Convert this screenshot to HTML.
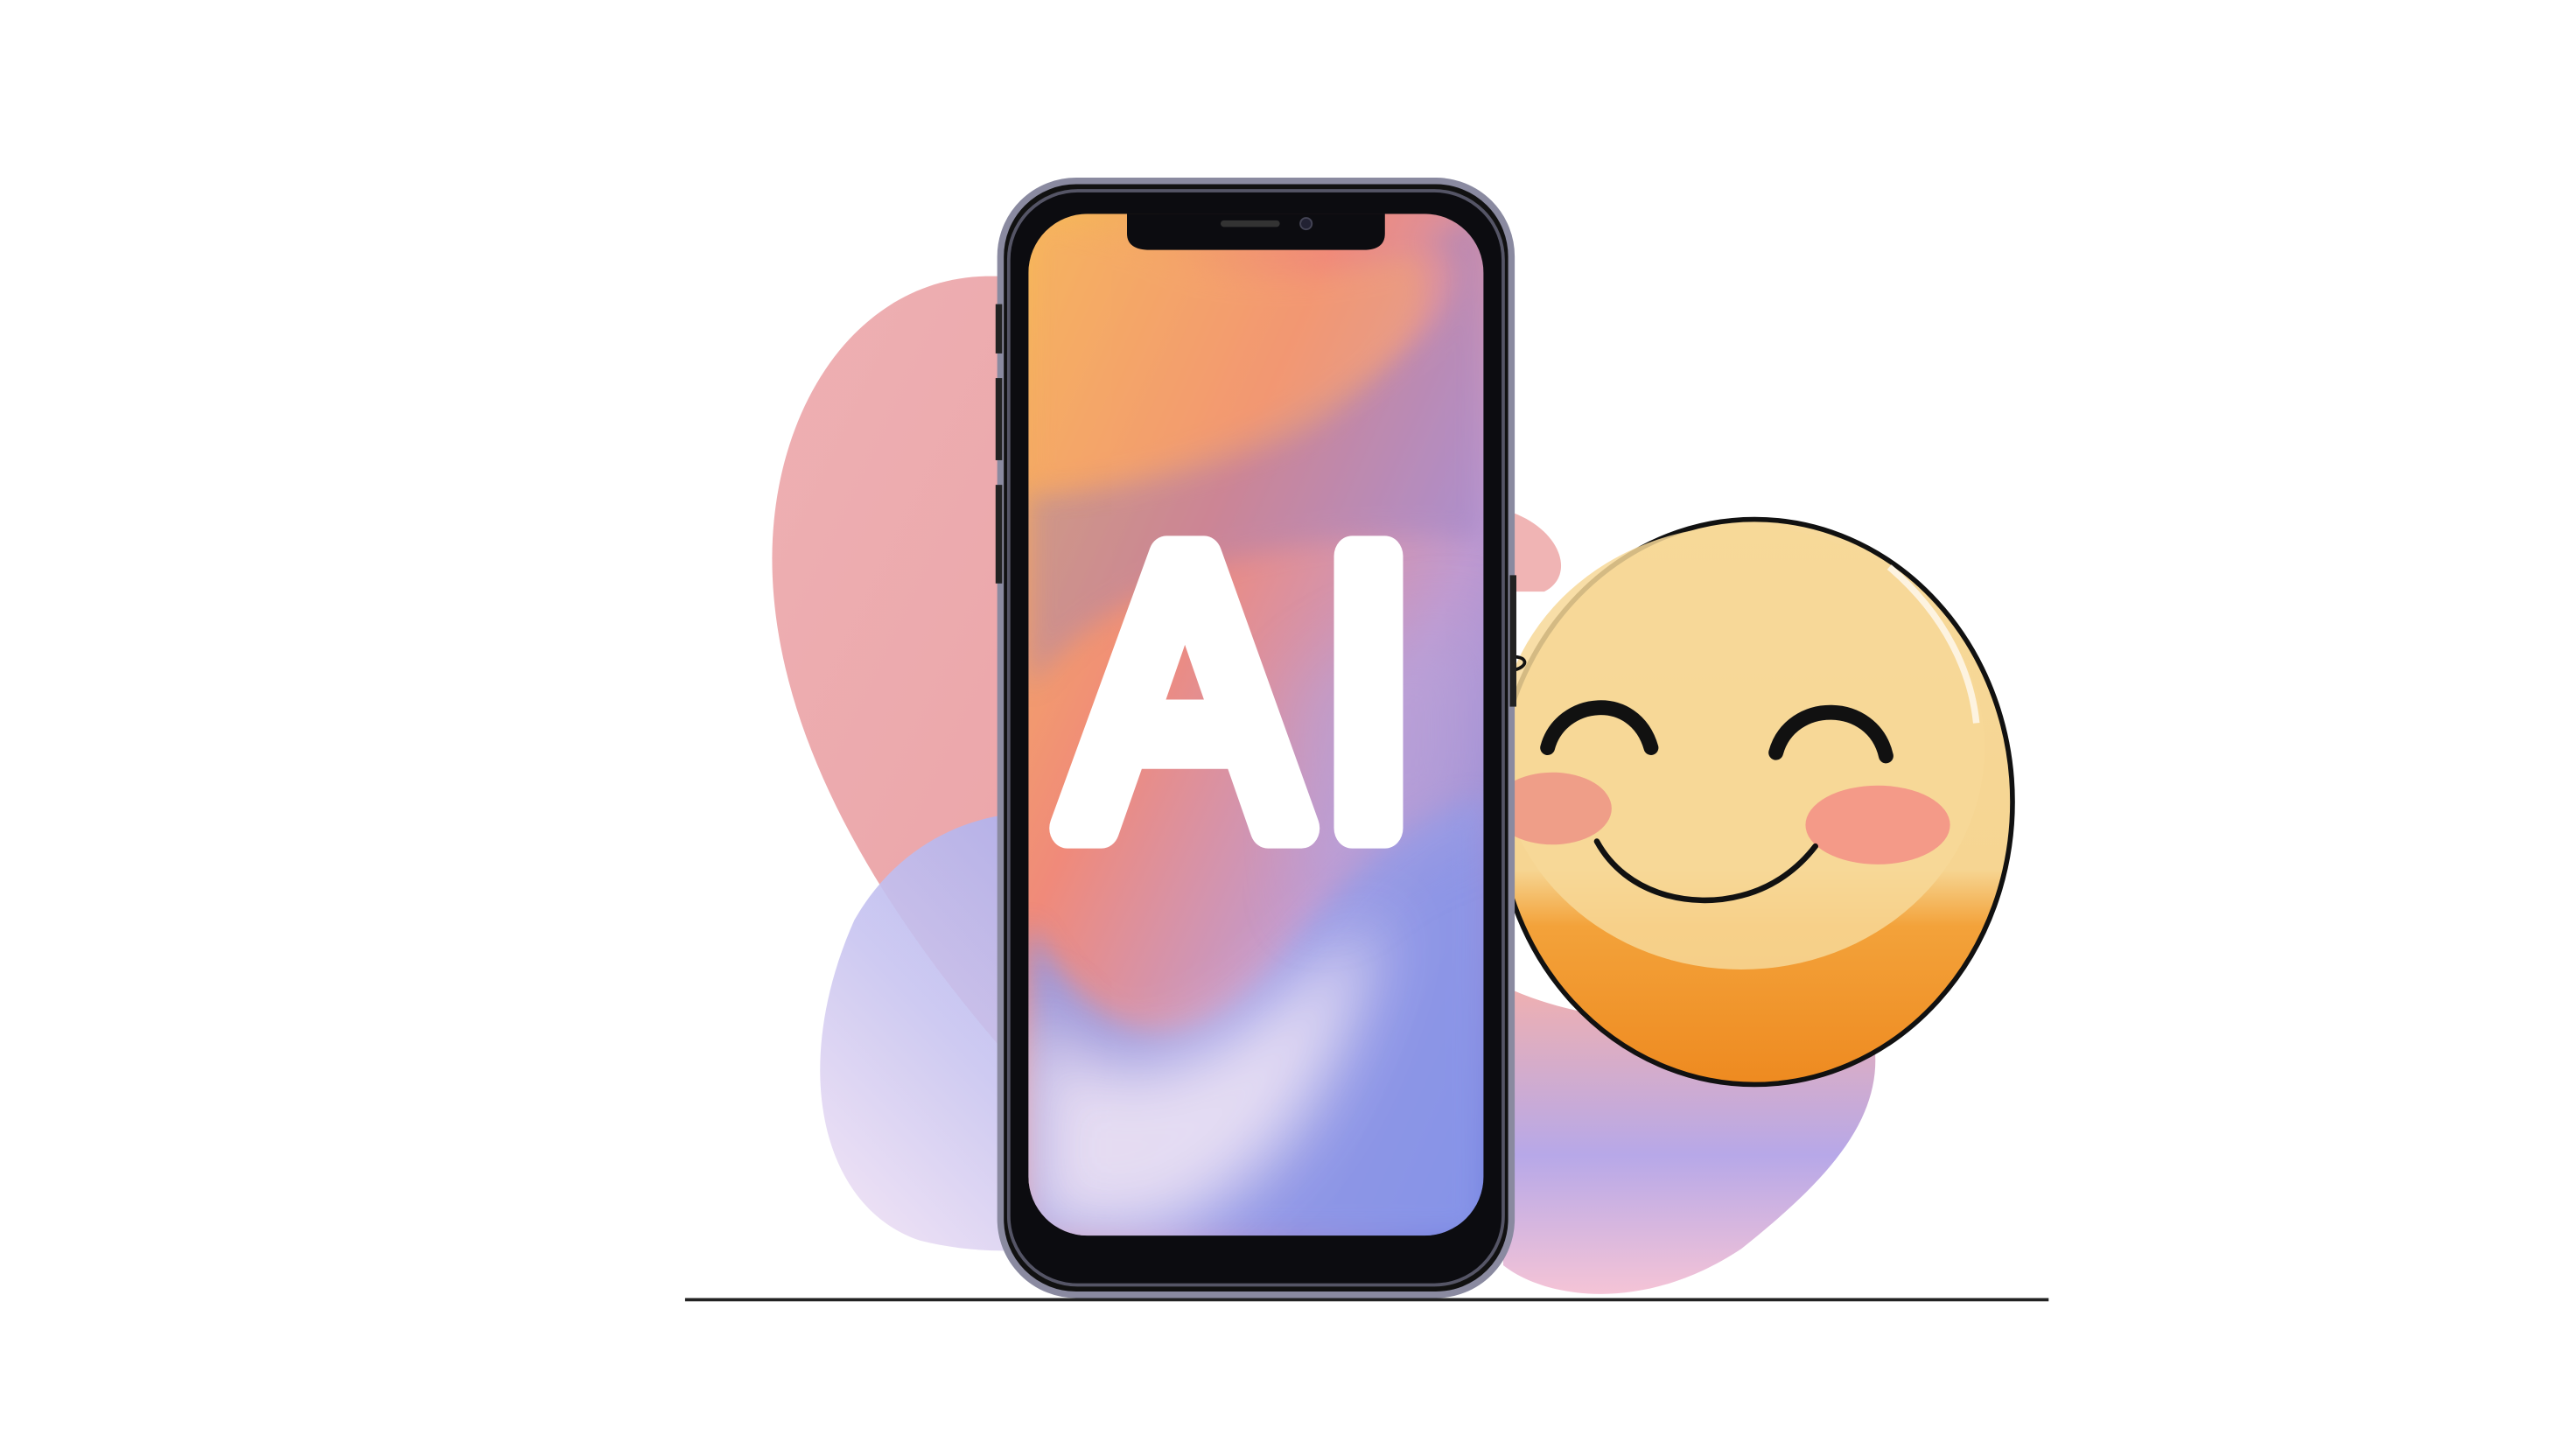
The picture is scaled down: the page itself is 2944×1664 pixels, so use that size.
<!DOCTYPE html>
<html><head><meta charset="utf-8"><style>
html,body{margin:0;padding:0;background:#fff;}
svg{display:block;}
</style></head><body>
<svg width="2944" height="1664" viewBox="0 0 1568 886" xmlns="http://www.w3.org/2000/svg">
<defs>
<filter id="b8" x="-20%" y="-20%" width="140%" height="140%"><feGaussianBlur stdDeviation="8"/></filter>
<filter id="b20" x="-30%" y="-30%" width="160%" height="160%"><feGaussianBlur stdDeviation="20"/></filter>
<linearGradient id="pinkL" x1="0" y1="0" x2="1" y2="1">
<stop offset="0" stop-color="#eeb0b3"/><stop offset="1" stop-color="#eaa2a6"/></linearGradient>
<linearGradient id="blueL" x1="1" y1="0" x2="0" y2="1">
<stop offset="0" stop-color="#9aa3ee"/><stop offset="0.6" stop-color="#c8c4f0"/><stop offset="1" stop-color="#f4e4f4"/></linearGradient>
<linearGradient id="rightB" x1="0" y1="0" x2="0" y2="1">
<stop offset="0" stop-color="#f0b0b0"/><stop offset="0.55" stop-color="#b7a8e8"/><stop offset="1" stop-color="#f5c4d6"/></linearGradient>
<linearGradient id="scr" x1="0" y1="0" x2="1" y2="1">
<stop offset="0" stop-color="#f6bd55"/><stop offset="0.35" stop-color="#f08a7a"/><stop offset="0.65" stop-color="#c09ad0"/><stop offset="1" stop-color="#7080e0"/></linearGradient>
<linearGradient id="face" x1="0" y1="0" x2="0" y2="1">
<stop offset="0" stop-color="#f7d99a"/><stop offset="0.62" stop-color="#f6d592"/><stop offset="0.72" stop-color="#f3a23a"/><stop offset="1" stop-color="#ee8a20"/></linearGradient>
<clipPath id="sc"><rect x="626" y="130" width="277" height="622" rx="36"/></clipPath>
</defs>

<path d="M600 168 C520 170 470 250 470 340 C470 450 540 560 620 650 L700 650 L700 168 Z" fill="url(#pinkL)"/>
<path d="M520 560 C560 490 640 480 700 510 L760 560 L740 700 C700 760 620 770 560 755 C500 735 480 650 520 560 Z" fill="url(#blueL)" opacity="0.9"/>
<path d="M915 310 C950 320 960 350 940 360 L915 360 Z" fill="#f0b4b4"/>
<path d="M915 600 C1000 640 1100 610 1140 630 C1150 680 1110 720 1060 760 C1000 800 940 790 915 770 Z" fill="url(#rightB)"/>

<line x1="417" y1="791" x2="1247" y2="791" stroke="#222" stroke-width="2"/>

<ellipse cx="1068" cy="488" rx="157" ry="172" fill="url(#face)" stroke="#111" stroke-width="3"/>
<ellipse cx="1060" cy="455" rx="148" ry="135" fill="#f7d898" opacity="0.85"/>
<path d="M1150 345 C1185 375 1200 410 1203 440" stroke="#fff" stroke-width="4" fill="none" opacity="0.7"/>
<ellipse cx="1143" cy="502" rx="44" ry="24" fill="#f49a88"/>
<ellipse cx="945" cy="492" rx="36" ry="22" fill="#ef9e88"/>
<path d="M942 455 C950 425 995 420 1005 455" stroke="#111" stroke-width="9" fill="none" stroke-linecap="round"/>
<path d="M1081 458 C1090 425 1140 425 1148 460" stroke="#111" stroke-width="9" fill="none" stroke-linecap="round"/>
<path d="M972 512 C990 545 1030 553 1060 545 C1080 540 1095 528 1105 515" stroke="#111" stroke-width="3.5" fill="none" stroke-linecap="round"/>
<path d="M918 400 C930 398 932 406 920 408" stroke="#111" stroke-width="2" fill="none"/>

<rect x="609" y="110" width="311" height="678" rx="46" fill="#111" stroke="#8a8aa0" stroke-width="4"/>
<rect x="614" y="116" width="301" height="666" rx="42" fill="#0c0c10" stroke="#555566" stroke-width="2"/>
<rect x="606" y="185" width="4" height="30" fill="#222"/>
<rect x="606" y="230" width="4" height="50" fill="#222"/>
<rect x="606" y="295" width="4" height="60" fill="#222"/>
<rect x="919" y="350" width="4" height="80" fill="#222"/>
<g clip-path="url(#sc)">
<rect x="626" y="130" width="277" height="622" fill="url(#scr)"/>
<path d="M626 300 C720 290 820 240 870 200 C900 170 880 140 860 150 L903 130 L903 330 C850 320 760 330 700 360 C660 380 640 400 626 420 Z" fill="#8a7cc8" opacity="0.35" filter="url(#b8)"/>
<path d="M700 150 C760 180 820 165 860 155 C880 180 860 220 800 260 C740 290 680 300 626 300 L626 130 Z" fill="#f6a86a" opacity="0.45" filter="url(#b8)"/>
<path d="M626 560 C680 660 740 640 790 570 C840 510 870 490 903 485 L903 752 L626 752 Z" fill="#8a98ea" opacity="0.8" filter="url(#b8)"/>
<path d="M626 600 C650 660 700 660 760 620 C800 590 830 560 840 560 C820 640 790 720 700 752 L626 752 Z" fill="#f3e8f6" opacity="0.85" filter="url(#b20)"/>
<path d="M790 420 C840 380 880 375 903 380 L903 500 C860 510 830 530 800 560 Z" fill="#b4a4dc" opacity="0.5" filter="url(#b20)"/>
</g>
<path d="M686 130 L686 142 Q686 152 700 152 L830 152 Q843 152 843 142 L843 130 Z" fill="#0c0c10"/>
<rect x="743" y="134" width="36" height="4" rx="2" fill="#333"/>
<circle cx="795" cy="136" r="3.5" fill="#223" stroke="#445" stroke-width="1"/>

<g font-family="Liberation Sans, sans-serif" font-weight="normal" font-size="215" fill="#fff" stroke="#fff" stroke-width="22" stroke-linejoin="round" text-anchor="middle">
<text transform="translate(721,504) scale(1,1.12)" x="0" y="0">A</text>
<text transform="translate(833,504) scale(1,1.12)" x="0" y="0">I</text>
</g>
</svg>
</body></html>
